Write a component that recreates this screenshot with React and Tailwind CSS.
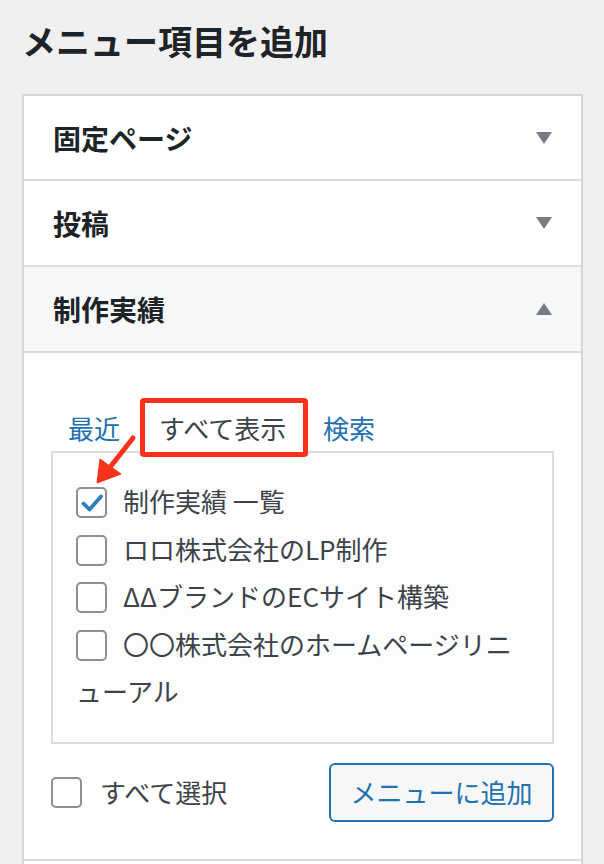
import React from "react";

const font = "font-['Noto_Sans_CJK_JP','Noto_Sans',sans-serif]";

function Tri({ up }) {
  return (
    <svg width="16" height="12" viewBox="0 0 16 12" className="block">
      {up ? (
        <polygon points="0,12 16,12 8,0" fill="#787c82" />
      ) : (
        <polygon points="0,0 16,0 8,12" fill="#787c82" />
      )}
    </svg>
  );
}

function Header({ label, up, bg, h }) {
  return (
    <div
      className={`flex items-center justify-between border-b-2 border-[#dcdcde] pl-[29px] pr-[29px] ${bg} ${h}`}
    >
      <span className="text-[28px] font-bold text-[#1d2327] leading-none">{label}</span>
      <Tri up={up} />
    </div>
  );
}

function Box({ checked }) {
  return (
    <span className="inline-flex align-middle relative -top-[2px] w-[31px] h-[31px] mr-[16px] rounded-[5px] border-2 border-[#8c8f94] bg-white items-center justify-center">
      {checked && (
        <svg width="24" height="24" viewBox="0 0 24 24">
          <path d="M3.5 12.5 L9.5 18.5 L21 5.5" fill="none" stroke="#2a7fbc" strokeWidth="3.8" strokeLinecap="round" strokeLinejoin="round" />
        </svg>
      )}
    </span>
  );
}

export default function App() {
  const items = [
    { t: "制作実績 一覧", c: true },
    { t: "ロロ株式会社のLP制作" },
    { t: "ΔΔブランドのECサイト構築" },
    { t: "〇〇株式会社のホームページリニューアル" },
  ];
  return (
    <div className={`relative min-h-[864px] h-[864px] overflow-hidden bg-[#f0f0f1] pl-[22px] pr-[21px] pt-[21px] ${font}`}>
      <h2 className="text-[34px] font-bold text-[#1d2327] leading-[40px]">メニュー項目を追加</h2>
      <div className="mt-[33px] border-2 border-[#d5d6d9] bg-white">
        <Header label="固定ページ" h="h-[85px]" bg="bg-white" />
        <Header label="投稿" h="h-[86px]" bg="bg-white" />
        <Header label="制作実績" up h="h-[86px]" bg="bg-[#f6f7f7]" />
        <div className="px-[27px] pt-[45px] pb-[37px] border-b-2 border-[#dcdcde]">
          <div className="flex items-center -mb-[6px] relative z-10 text-[26px] leading-none">
            <span className="ml-[17px] text-[#2271b1]">最近</span>
            <span className="ml-[20px] h-[59px] w-[168px] flex items-center pl-[14px] border-[5px] border-[#f8321a] rounded-[4px] bg-white text-[#3c434a]">
              すべて表示
            </span>
            <span className="ml-[15px] text-[#2271b1]">検索</span>
          </div>
          <div className="border-2 border-[#dcdcde] bg-[#fdfdfd] pl-[23px] pr-[24px] pt-[24px] pb-[27px]">
            <ul className="text-[26px] leading-[47.5px] text-[#3c434a]">
              {items.map((it) => (
                <li key={it.t}>
                  <Box checked={it.c} />
                  {it.t}
                </li>
              ))}
            </ul>
          </div>
          <div className="mt-[19px] flex items-center justify-between">
            <label className="flex items-center text-[26px] text-[#3c434a] leading-none">
              <span className="w-[31px] h-[31px] mr-[18px] rounded-[5px] border-2 border-[#8c8f94] bg-white" />
              すべて選択
            </label>
            <button className="h-[59px] w-[225px] rounded-[6px] border-2 border-[#2271b1] bg-[#f6f7f7] text-[#2271b1] text-[26px] leading-none">
              メニューに追加
            </button>
          </div>
        </div>
        <div className="h-[40px] bg-white" />
      </div>
      <svg className="absolute left-0 top-0 pointer-events-none" width="604" height="864">
        <line x1="133" y1="438" x2="111" y2="466" stroke="#f8321a" strokeWidth="5" strokeLinecap="round" />
        <polygon points="97,483 100,459 121,474" fill="#f8321a" strokeLinejoin="round" stroke="#f8321a" strokeWidth="1" />
      </svg>
    </div>
  );
}
